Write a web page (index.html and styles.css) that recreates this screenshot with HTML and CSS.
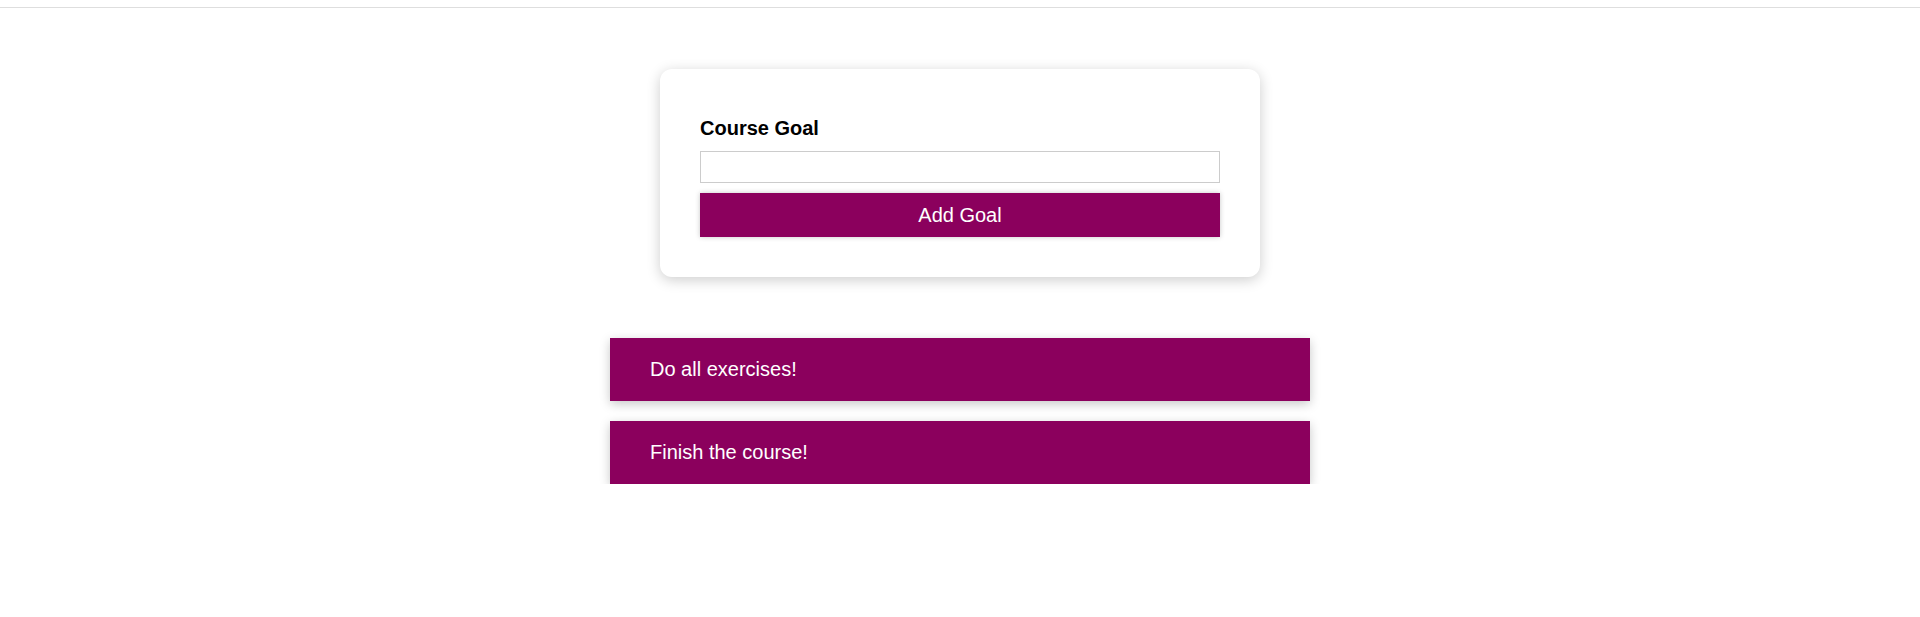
FILE: index.html
```html
<!DOCTYPE html>
<html lang="en">
<head>
<meta charset="utf-8">
<title>Course Goals</title>
<link rel="stylesheet" href="styles.css">
</head>
<body>
<div class="topbar"></div>
<section class="goal-form">
  <form class="form">
    <label class="form-label" for="goal">Course Goal</label>
    <input class="form-input" id="goal" type="text">
    <button class="button" type="button">Add Goal</button>
  </form>
</section>
<section class="goals">
  <ul class="goal-list">
    <li class="goal-item">Do all exercises!</li>
    <li class="goal-item">Finish the course!</li>
  </ul>
</section>
</body>
</html>
```
FILE: styles.css
```css
* { box-sizing: border-box; }
html, body {
  margin: 0;
  padding: 0;
  background: #fff;
  font-family: "Liberation Sans", Arial, sans-serif;
}
.topbar {
  height: 8px;
  border-bottom: 1px solid #dedede;
}
.goal-form {
  width: 600px;
  margin: 61px auto 0;
  padding: 48px 40px 40px;
  background: #fff;
  border-radius: 12px;
  box-shadow: 0 3px 14px rgba(0, 0, 0, 0.2);
}
.form {
  display: flex;
  flex-direction: column;
}
.form-label {
  font-weight: bold;
  font-size: 20px;
  line-height: 23px;
  color: #000;
  margin-bottom: 11px;
}
.form-input {
  height: 32px;
  border: 1px solid #ccc;
  font: inherit;
  font-size: 16px;
  padding: 4px 6px;
  margin: 0 0 10px;
  outline: none;
}
.button {
  height: 44px;
  border: 1px solid #8b005d;
  background: #8b005d;
  color: #fff;
  font-family: inherit;
  font-size: 20px;
  line-height: 23px;
  padding: 0;
  box-shadow: 0 0 5px rgba(0, 0, 0, 0.22);
  cursor: pointer;
}
.goals {
  width: 700px;
  margin: 61px auto 0;
}
.goal-list {
  list-style: none;
  margin: 0;
  padding: 0;
  display: flex;
  flex-direction: column;
  gap: 20px;
}
.goal-item {
  background: #8b005d;
  color: #fff;
  font-size: 20px;
  line-height: 23px;
  padding: 20px 40px;
  box-shadow: 0 3px 10px rgba(0, 0, 0, 0.22);
}
```
